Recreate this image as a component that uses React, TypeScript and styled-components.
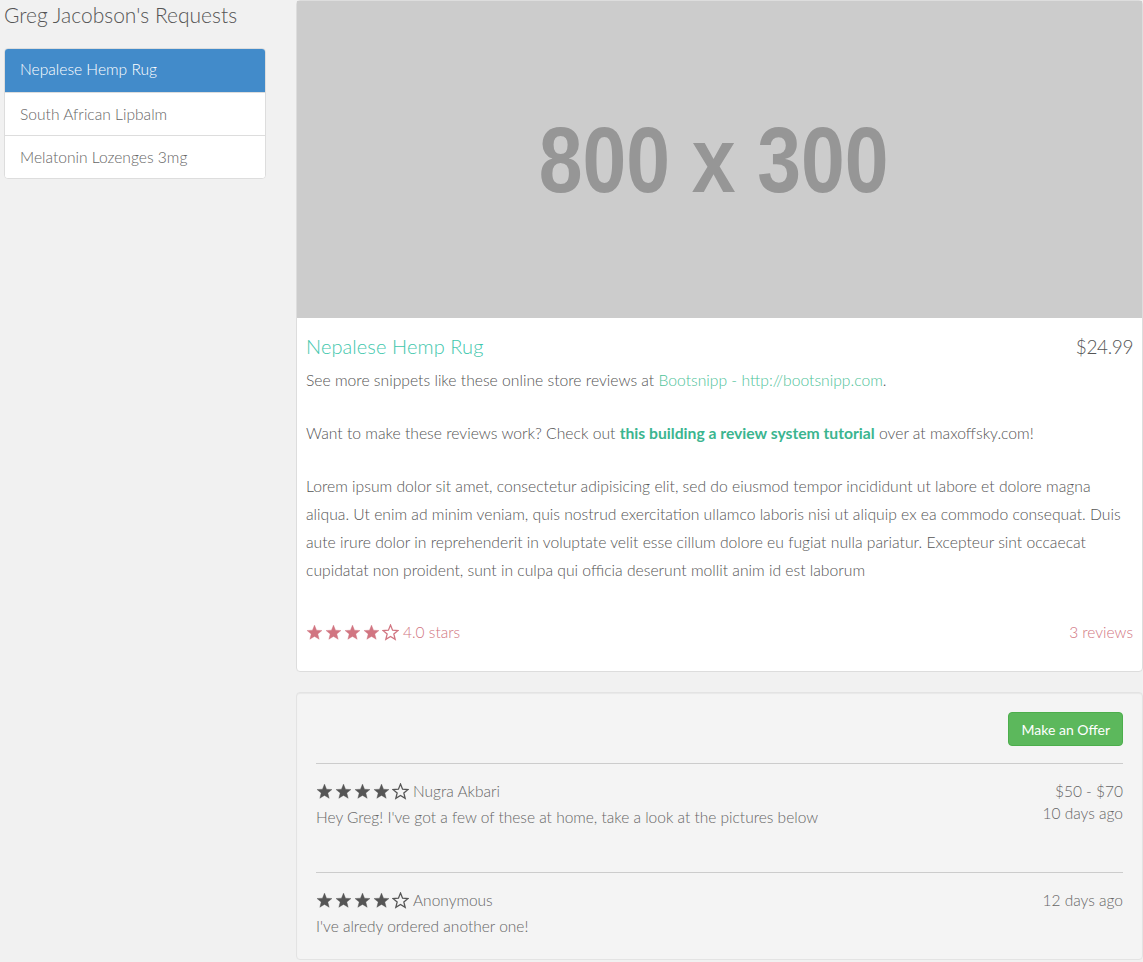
import React from "react";
import styled, { createGlobalStyle } from "styled-components";

const Global = createGlobalStyle`
  html, body { margin: 0; padding: 0; }
  body {
    background: #f1f1f1;
    font-family: Lato, "Open Sans", "Liberation Sans", sans-serif;
    font-weight: 300;
    color: #555;
    font-size: 15px;
  }
  * { box-sizing: border-box; }
`;

const Page = styled.div`
  display: grid;
  grid-template-columns: 296px 847px;
  width: 1143px;
  height: 962px;
  overflow: hidden;
`;

const Side = styled.aside`
  padding: 0 30px 0 4px;
`;

const SideTitle = styled.h1`
  margin: 3px 0 21px 0;
  font-size: 21px;
  font-weight: 300;
  line-height: 24px;
  color: #555;
`;

const ListGroup = styled.div`
  display: flex;
  flex-direction: column;
  border: 1px solid #ddd;
  border-radius: 4px;
  background: #fff;
  overflow: hidden;
  width: 262px;
`;

const ListItem = styled.a<{ $active?: boolean }>`
  display: block;
  height: ${(p) => (p.$active ? "44px" : "43px")};
  line-height: 42px;
  padding: 0 15px;
  font-size: 15.6px;
  color: ${(p) => (p.$active ? "#fff" : "#666")};
  background: ${(p) => (p.$active ? "#428bca" : "#fff")};
  border-top: ${(p) => (p.$active ? "none" : "1px solid #ddd")};
  margin-top: ${(p) => (p.$active ? "-1px" : "0")};
  text-decoration: none;
`;

const Main = styled.main`
  display: flex;
  flex-direction: column;
  gap: 20px;
`;

const Thumbnail = styled.div`
  background: #fff;
  border: 1px solid #ddd;
  border-radius: 4px;
`;

const Placeholder = styled.div`
  height: 317px;
  background: #ccc;
  display: flex;
  align-items: center;
  justify-content: center;
  padding-right: 12px;
`;

const PlaceholderText = styled.span`
  display: inline-block;
  font-family: "Liberation Sans", Arial, sans-serif;
  font-weight: 700;
  font-size: 92px;
  color: #969696;
  transform: scaleX(0.855);
  white-space: pre;
  line-height: 1;
`;

const Caption = styled.div`
  padding: 16px 9px 0 9px;
`;

const TitleRow = styled.div`
  display: flex;
  justify-content: space-between;
  align-items: baseline;
  margin-bottom: 8px;
`;

const ProductTitle = styled.h4`
  margin: 0;
  font-size: 20px;
  font-weight: 300;
  line-height: 24px;
  color: #3fc7ad;
  letter-spacing: 0.1px;
`;

const Price = styled.span`
  font-size: 19px;
  font-weight: 300;
  color: #555;
  letter-spacing: -0.4px;
`;

const Para = styled.p<{ $last?: boolean }>`
  margin: 0 0 ${(p) => (p.$last ? "0" : "25px")} 0;
  font-size: 15.7px;
  line-height: 28px;
  color: #555;
`;

const Link = styled.a<{ $strong?: boolean }>`
  color: ${(p) => (p.$strong ? "#3bb58f" : "#4fc39a")};
  font-weight: ${(p) => (p.$strong ? 700 : 300)};
  text-decoration: none;
`;

const RatingRow = styled.div`
  display: flex;
  justify-content: space-between;
  align-items: center;
  padding: 39px 0 30px 0;
`;

const Rating = styled.div`
  display: flex;
  align-items: center;
  gap: 4px;
  color: #d17581;
  font-size: 15.5px;
`;

const Stars = styled.span`
  display: inline-flex;
  gap: 2px;
`;

const Well = styled.div`
  background: #f4f4f4;
  border: 1px solid #e3e3e3;
  border-radius: 4px;
  padding: 19px 19px 22px 19px;
  box-shadow: inset 0 1px 1px rgba(0, 0, 0, 0.05);
`;

const OfferBar = styled.div`
  display: flex;
  justify-content: flex-end;
`;

const OfferButton = styled.button`
  font-family: Lato, "Open Sans", sans-serif;
  font-weight: 400;
  font-size: 14px;
  color: #fff;
  background: #5cb85c;
  border: 1px solid #4cae4c;
  border-radius: 4px;
  height: 34px;
  padding: 0 12px;
`;

const Rule = styled.hr`
  border: 0;
  border-top: 1px solid #ccc;
  margin: 17px 0 0 0;
`;

const Review = styled.div<{ $tall?: boolean }>`
  display: flex;
  justify-content: space-between;
  padding: 16px 0 0 0;
  min-height: ${(p) => (p.$tall ? "91px" : "auto")};
`;

const ReviewBody = styled.div`
  display: flex;
  flex-direction: column;
  gap: 4px;
`;

const ReviewHead = styled.div`
  display: flex;
  align-items: center;
  gap: 4px;
  color: #666;
  font-size: 15.5px;
  line-height: 22px;
`;

const ReviewText = styled.div`
  font-size: 15.5px;
  line-height: 22px;
  color: #666;
`;

const ReviewMeta = styled.div`
  display: flex;
  flex-direction: column;
  align-items: flex-end;
  font-size: 15.5px;
  line-height: 22px;
  color: #666;
`;

const Star: React.FC<{ filled: boolean; color: string }> = ({ filled, color }) => (
  <svg width="17" height="17" viewBox="0 0 24 24">
    <polygon
      points="12,1.5 14.9,8.7 22.6,9.2 16.7,14.1 18.6,21.6 12,17.5 5.4,21.6 7.3,14.1 1.4,9.2 9.1,8.7"
      fill={filled ? color : "none"}
      stroke={color}
      strokeWidth={filled ? 0.5 : 1.8}
      strokeLinejoin="miter"
    />
  </svg>
);

const StarRow: React.FC<{ n: number; color: string }> = ({ n, color }) => (
  <Stars>
    {[0, 1, 2, 3, 4].map((i) => (
      <Star key={i} filled={i < n} color={color} />
    ))}
  </Stars>
);

export default function App() {
  return (
    <>
      <Global />
      <Page>
        <Side>
          <SideTitle>Greg Jacobson's Requests</SideTitle>
          <ListGroup>
            <ListItem $active>Nepalese Hemp Rug</ListItem>
            <ListItem>South African Lipbalm</ListItem>
            <ListItem>Melatonin Lozenges 3mg</ListItem>
          </ListGroup>
        </Side>
        <Main>
          <Thumbnail>
            <Placeholder>
              <PlaceholderText>800 x 300</PlaceholderText>
            </Placeholder>
            <Caption>
              <TitleRow>
                <ProductTitle>Nepalese Hemp Rug</ProductTitle>
                <Price>$24.99</Price>
              </TitleRow>
              <Para>
                See more snippets like these online store reviews at{" "}
                <Link>Bootsnipp - http://bootsnipp.com</Link>.
              </Para>
              <Para>
                Want to make these reviews work? Check out{" "}
                <Link $strong>this building a review system tutorial</Link> over at maxoffsky.com!
              </Para>
              <Para $last>
                Lorem ipsum dolor sit amet, consectetur adipisicing elit, sed do eiusmod tempor
                incididunt ut labore et dolore magna aliqua. Ut enim ad minim veniam, quis nostrud
                exercitation ullamco laboris nisi ut aliquip ex ea commodo consequat. Duis aute irure
                dolor in reprehenderit in voluptate velit esse cillum dolore eu fugiat nulla pariatur.
                Excepteur sint occaecat cupidatat non proident, sunt in culpa qui officia deserunt
                mollit anim id est laborum
              </Para>
              <RatingRow>
                <Rating>
                  <StarRow n={4} color="#d17581" />
                  <span>4.0 stars</span>
                </Rating>
                <Rating>3 reviews</Rating>
              </RatingRow>
            </Caption>
          </Thumbnail>
          <Well>
            <OfferBar>
              <OfferButton>Make an Offer</OfferButton>
            </OfferBar>
            <Rule />
            <Review $tall>
              <ReviewBody>
                <ReviewHead>
                  <StarRow n={4} color="#555" />
                  <span>Nugra Akbari</span>
                </ReviewHead>
                <ReviewText>
                  Hey Greg! I've got a few of these at home, take a look at the pictures below
                </ReviewText>
              </ReviewBody>
              <ReviewMeta>
                <span>$50 - $70</span>
                <span>10 days ago</span>
              </ReviewMeta>
            </Review>
            <Rule />
            <Review>
              <ReviewBody>
                <ReviewHead>
                  <StarRow n={4} color="#555" />
                  <span>Anonymous</span>
                </ReviewHead>
                <ReviewText>I've alredy ordered another one!</ReviewText>
              </ReviewBody>
              <ReviewMeta>
                <span>12 days ago</span>
              </ReviewMeta>
            </Review>
          </Well>
        </Main>
      </Page>
    </>
  );
}
